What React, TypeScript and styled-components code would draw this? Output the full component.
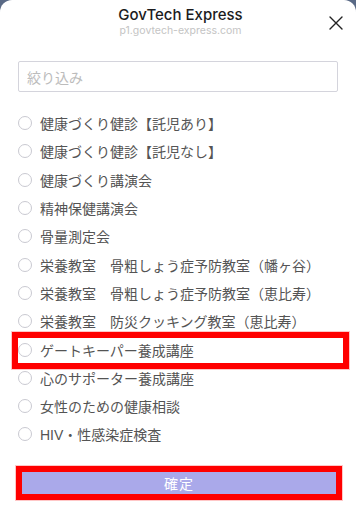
import React from 'react';
import styled, { createGlobalStyle } from 'styled-components';

const GlobalStyle = createGlobalStyle`
  html, body {
    margin: 0;
    padding: 0;
    background: #5a6a86;
  }
  body {
    font-family: "Liberation Sans", "Noto Sans CJK JP", sans-serif;
  }
  * {
    box-sizing: border-box;
  }
`;

const ITEMS = [
  '健康づくり健診【託児あり】',
  '健康づくり健診【託児なし】',
  '健康づくり講演会',
  '精神保健講演会',
  '骨量測定会',
  '栄養教室　骨粗しょう症予防教室（幡ヶ谷）',
  '栄養教室　骨粗しょう症予防教室（恵比寿）',
  '栄養教室　防災クッキング教室（恵比寿）',
  'ゲートキーパー養成講座',
  '心のサポーター養成講座',
  '女性のための健康相談',
  'HIV・性感染症検査',
];

const HIGHLIGHTED = 8;

function App() {
  return (
    <>
      <GlobalStyle />
      <Sheet>
        <Header>
          <span />
          <TitleBlock>
            <Title>GovTech Express</Title>
            <Domain>p1.govtech-express.com</Domain>
          </TitleBlock>
          <CloseButton aria-label="閉じる">
            <svg width="14" height="14" viewBox="0 0 14 14">
              <path
                d="M1 1L13 13M13 1L1 13"
                stroke="#222"
                strokeWidth="1.4"
                strokeLinecap="round"
              />
            </svg>
          </CloseButton>
        </Header>
        <Body>
          <Filter placeholder="絞り込み" />
          <List>
            {ITEMS.map((label, i) => (
              <Row key={label} $marked={i === HIGHLIGHTED}>
                <Radio />
                <Label>{label}</Label>
              </Row>
            ))}
          </List>
          <Submit>確定</Submit>
        </Body>
      </Sheet>
    </>
  );
}

export default App;

const Sheet = styled.div`
  width: 356px;
  min-height: 510px;
  background: #fff;
  border-radius: 12px 12px 0 0;
  overflow: hidden;
`;
const Header = styled.header`
  display: grid;
  grid-template-columns: 1fr auto 1fr;
  align-items: center;
  padding: 6px 13px 0 18px;
`;
const TitleBlock = styled.div`
  display: flex;
  flex-direction: column;
  align-items: center;
`;
const Title = styled.h1`
  margin: 0;
  font-family: Inter, "Liberation Sans", sans-serif;
  font-size: 15px;
  line-height: 18px;
  font-weight: 500;
  color: #1c1c1e;
`;
const Domain = styled.p`
  margin: 0;
  font-family: Inter, "Liberation Sans", sans-serif;
  font-size: 10.5px;
  line-height: 14px;
  color: #c4c4c4;
`;
const CloseButton = styled.button`
  justify-self: end;
  display: flex;
  padding: 1px 0 0;
  border: none;
  background: none;
`;
const Body = styled.div`
  display: flex;
  flex-direction: column;
  padding: 23px 18px 0;
`;
const Filter = styled.input`
  height: 31px;
  padding: 0 8px;
  border: 1px solid #d4d4dc;
  border-radius: 2px;
  font-family: "Noto Sans CJK JP", sans-serif;
  font-size: 14px;
  color: #333;
  outline: none;
  &::placeholder {
    color: #bcbcbc;
  }
`;
const List = styled.ul`
  list-style: none;
  margin: 17px 0 0;
  padding: 0;
`;
const Row = styled.li<{ $marked?: boolean }>`
  position: relative;
  display: flex;
  align-items: center;
  gap: 8px;
  height: 28.3px;
  &::after {
    content: '';
    display: ${(p) => (p.$marked ? 'block' : 'none')};
    position: absolute;
    top: -3px;
    bottom: -5px;
    left: -6px;
    right: -11px;
    border: 6px solid #ff0000;
    box-shadow: 0 0 0 1px rgba(255, 0, 0, 0.22);
    pointer-events: none;
  }
`;
const Radio = styled.span`
  flex: none;
  width: 14px;
  height: 14px;
  border: 1px solid #c9c9d1;
  border-radius: 50%;
`;
const Label = styled.span`
  font-family: "Liberation Sans", "Noto Sans CJK JP", sans-serif;
  font-size: 14px;
  color: #545454;
  white-space: nowrap;
`;
const Submit = styled.button`
  margin: 17px -4px 0 -2px;
  height: 34px;
  border: 6px solid #ff0000;
  box-shadow: 0 0 0 1px rgba(255, 0, 0, 0.22);
  background: #aaa9ea;
  color: #fff;
  font-family: "Noto Sans CJK JP", sans-serif;
  font-size: 14px;
  letter-spacing: 1px;
`;
